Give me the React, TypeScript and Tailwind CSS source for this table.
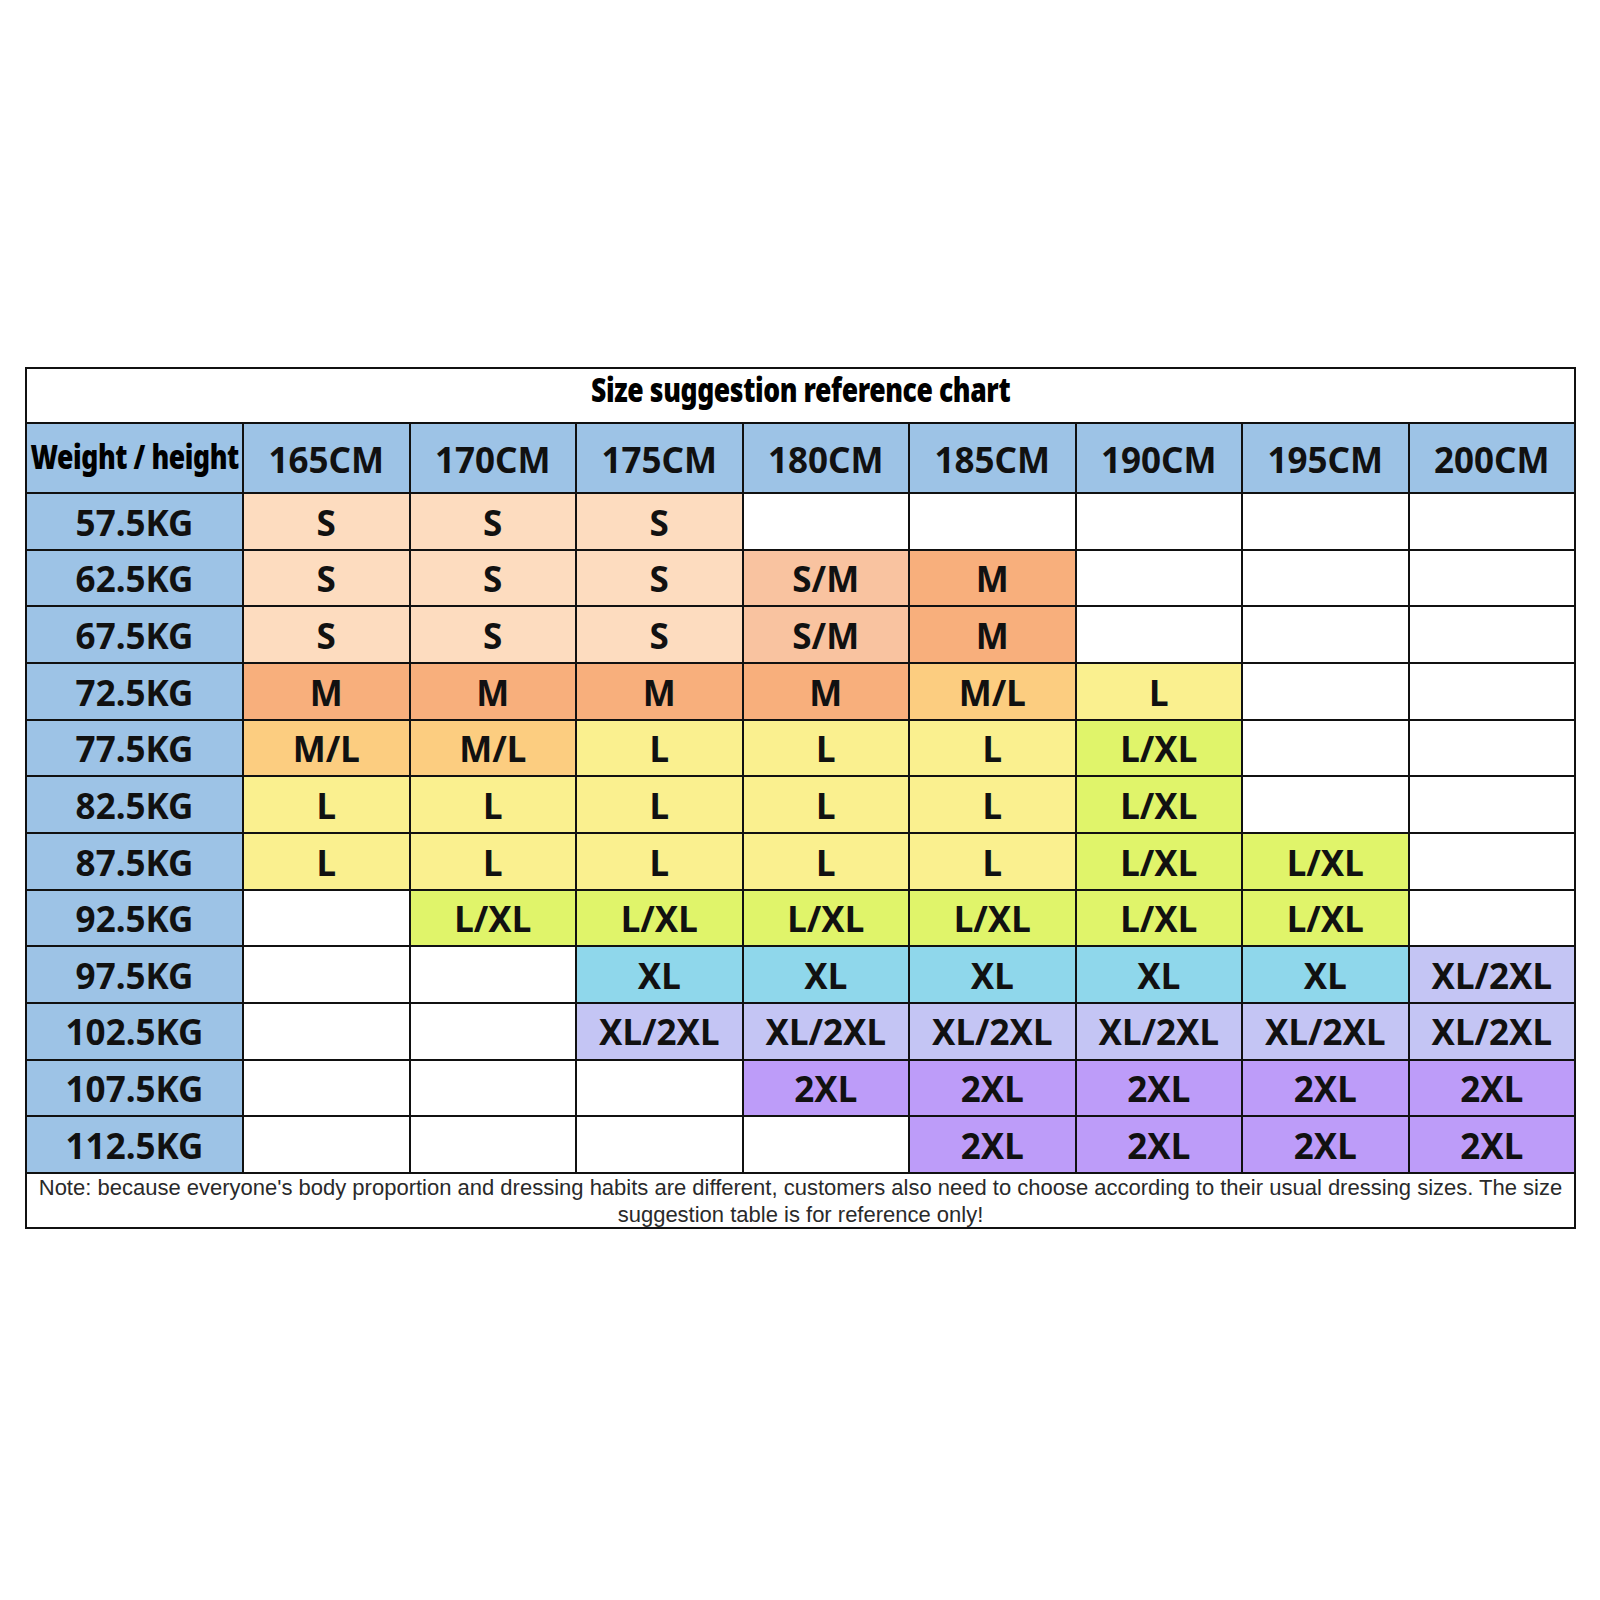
import React from 'react';

const heights = ['165CM', '170CM', '175CM', '180CM', '185CM', '190CM', '195CM', '200CM'];

// background for each size label
const sizeBg: Record<string, string> = {
  S: 'bg-[#fddcbf]',
  'S/M': 'bg-[#f9c3a0]',
  M: 'bg-[#f8af7c]',
  'M/L': 'bg-[#fccd80]',
  L: 'bg-[#faf08f]',
  'L/XL': 'bg-[#e0f46a]',
  XL: 'bg-[#8fd7eb]',
  'XL/2XL': 'bg-[#c4c5f4]',
  '2XL': 'bg-[#bd9cf9]',
};

const rows: { weight: string; sizes: string[] }[] = [
  { weight: '57.5KG', sizes: ['S', 'S', 'S', '', '', '', '', ''] },
  { weight: '62.5KG', sizes: ['S', 'S', 'S', 'S/M', 'M', '', '', ''] },
  { weight: '67.5KG', sizes: ['S', 'S', 'S', 'S/M', 'M', '', '', ''] },
  { weight: '72.5KG', sizes: ['M', 'M', 'M', 'M', 'M/L', 'L', '', ''] },
  { weight: '77.5KG', sizes: ['M/L', 'M/L', 'L', 'L', 'L', 'L/XL', '', ''] },
  { weight: '82.5KG', sizes: ['L', 'L', 'L', 'L', 'L', 'L/XL', '', ''] },
  { weight: '87.5KG', sizes: ['L', 'L', 'L', 'L', 'L', 'L/XL', 'L/XL', ''] },
  { weight: '92.5KG', sizes: ['', 'L/XL', 'L/XL', 'L/XL', 'L/XL', 'L/XL', 'L/XL', ''] },
  { weight: '97.5KG', sizes: ['', '', 'XL', 'XL', 'XL', 'XL', 'XL', 'XL/2XL'] },
  { weight: '102.5KG', sizes: ['', '', 'XL/2XL', 'XL/2XL', 'XL/2XL', 'XL/2XL', 'XL/2XL', 'XL/2XL'] },
  { weight: '107.5KG', sizes: ['', '', '', '2XL', '2XL', '2XL', '2XL', '2XL'] },
  { weight: '112.5KG', sizes: ['', '', '', '', '2XL', '2XL', '2XL', '2XL'] },
];

const cellFont = "font-['Noto_Sans',sans-serif] font-bold text-[35px] text-[#111]";
// no condensed face installed, so squeeze a heavy sans horizontally
const narrowFont = "inline-block font-['Noto_Sans',sans-serif] font-black text-[34px] leading-none text-black whitespace-nowrap scale-x-[0.78] tracking-[-0.5px]";

export default function App() {
  return (
    <div className="w-[1600px] h-[1600px] bg-white pt-[367px] pl-[25px]">
      <div className="w-[1551px] bg-[#111] p-[2px] grid grid-cols-[215px_repeat(8,1fr)] gap-[2px]">
        {/* Title */}
        <div className="col-span-9 h-[53px] bg-white flex items-center justify-center pb-[13px]">
          <span className={narrowFont}>Size suggestion reference chart</span>
        </div>

        {/* Header */}
        <div className="h-[68px] bg-[#9dc3e6] flex items-center justify-center pb-[4px]">
          <span className={narrowFont}>Weight / height</span>
        </div>
        {heights.map(h => (
          <div key={h} className="h-[68px] bg-[#9dc3e6] flex items-center justify-center pt-[4px]">
            <span className={cellFont}>{h}</span>
          </div>
        ))}

        {/* Data rows */}
        {rows.map(r => (
          <React.Fragment key={r.weight}>
            <div className="h-[54.67px] bg-[#9dc3e6] flex items-center justify-center pt-[3px]">
              <span className={cellFont}>{r.weight}</span>
            </div>
            {r.sizes.map((s, i) => (
              <div
                key={i}
                className={`h-[54.67px] flex items-center justify-center pt-[3px] ${s ? sizeBg[s] : 'bg-white'}`}
              >
                <span className={cellFont}>{s}</span>
              </div>
            ))}
          </React.Fragment>
        ))}

        {/* Note */}
        <div className="col-span-9 h-[53px] bg-white flex flex-col items-center justify-start">
          <p className="font-['Liberation_Sans',sans-serif] text-[22px] leading-[27px] text-[#2a2a2a] text-center whitespace-nowrap">
            Note: because everyone's body proportion and dressing habits are different, customers also need to choose according to their usual dressing sizes. The size
          </p>
          <p className="font-['Liberation_Sans',sans-serif] text-[22px] leading-[27px] text-[#2a2a2a] text-center">
            suggestion table is for reference only!
          </p>
        </div>
      </div>
    </div>
  );
}
